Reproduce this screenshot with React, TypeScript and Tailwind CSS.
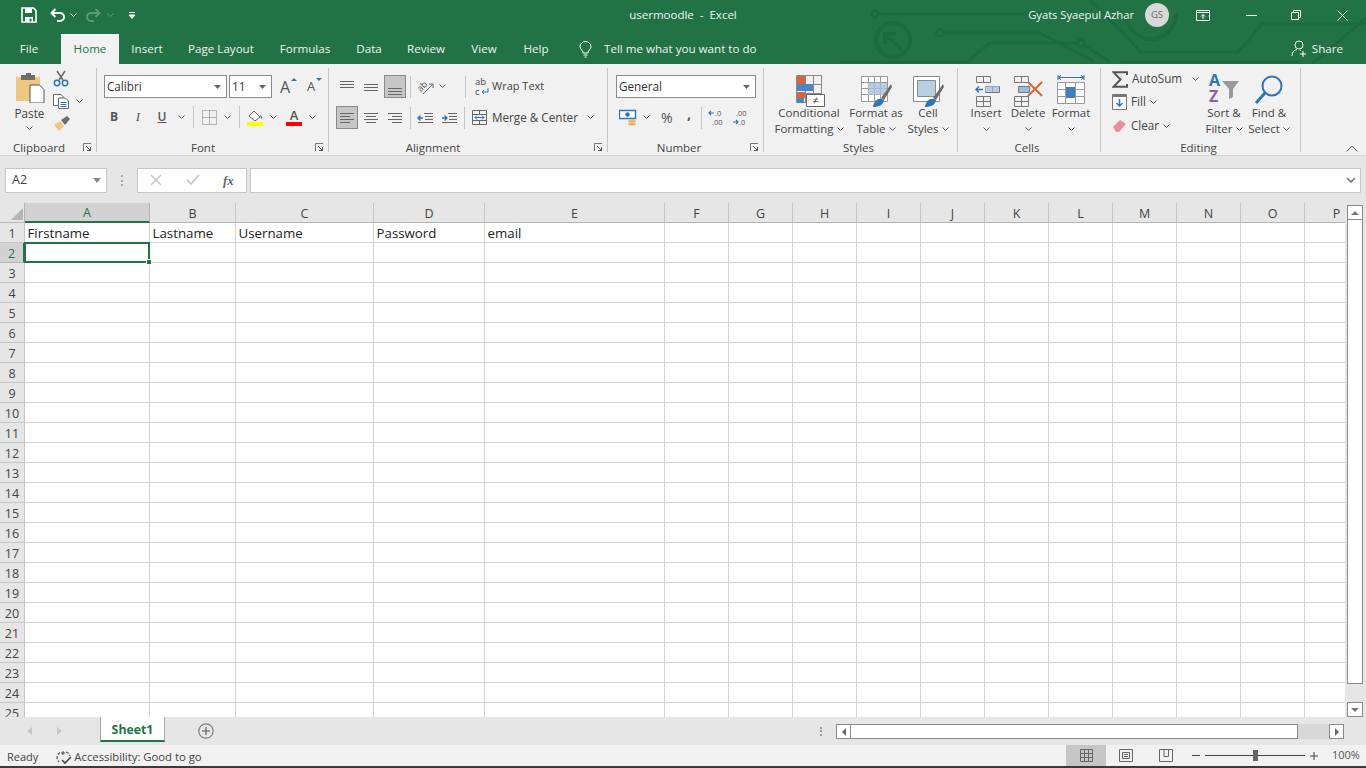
const columns = ["A", "B", "C", "D", "E", "F", "G", "H", "I", "J", "K", "L", "M", "N", "O", "P"];
const firstRow: Record<string, string> = { A: "Firstname", B: "Lastname", C: "Username", D: "Password", E: "email" };
const rows = Array.from({ length: 25 }, (_, i) => i + 1);

const Chevron = ({ className = "", color = "#555" }: { className?: string; color?: string }) => (
  <svg width="7" height="5" viewBox="0 0 7 5" className={className}>
    <path d="M0.5 0.5 L3.5 3.5 L6.5 0.5" fill="none" stroke={color} strokeWidth="1" />
  </svg>
);

const Launcher = () => (
  <svg width="9" height="9" viewBox="0 0 9 9" className="shrink-0 ml-auto">
    <path d="M0.5 8 V0.5 H8" fill="none" stroke="#777" />
    <path d="M3 3 L7.5 7.5 M7.5 4 V7.5 H4" fill="none" stroke="#555" />
  </svg>
);

const Sep = ({ h = "h-[22px]" }: { h?: string }) => <div className={`w-px bg-[#c6c6c6] ${h}`} />;

const Lines = ({ ys, widths }: { ys: number[]; widths: [number, number][] }) => (
  <svg width="16" height="16" viewBox="0 0 16 16">
    {ys.map((y, i) => (
      <path key={i} d={`M${widths[i][0]} ${y}.5 H${widths[i][1]}`} stroke="#666" />
    ))}
  </svg>
);

const Group = ({
  width,
  label,
  labelClass,
  launcher,
  children,
}: {
  width: string;
  label: string;
  labelClass: string;
  launcher?: boolean;
  children: React.ReactNode;
}) => (
  <div className={`${width} h-[84px] mt-[4px] border-r border-[#c6c6c6] flex flex-col shrink-0`}>
    <div className="h-[75px] flex">{children}</div>
    <div className="h-[9px] flex items-center pr-[4px]">
      <div className={`text-[11.5px] leading-none text-[#444] text-center ${labelClass}`}>{label}</div>
      {launcher && <Launcher />}
    </div>
  </div>
);

const Combo = ({ width, text }: { width: string; text: string }) => (
  <div className={`${width} h-[23px] bg-white border border-[#8a8a8a] flex items-center justify-between pl-[2px] pr-[5px] text-[11.7px] text-[#333]`}>
    <span>{text}</span>
    <svg width="7" height="4" viewBox="0 0 7 4">
      <path d="M0 0 H7 L3.5 4 Z" fill="#666" />
    </svg>
  </div>
);

const BigButton = ({
  width,
  icon,
  line1,
  line2,
}: {
  width: string;
  icon: React.ReactNode;
  line1: string;
  line2?: string;
}) => (
  <div className={`${width} flex flex-col items-center text-[11.5px] leading-[16px] text-[#444] shrink-0`}>
    <div className="h-[33px] flex items-start">{icon}</div>
    <div className="whitespace-nowrap">{line1}</div>
    <div className="whitespace-nowrap flex items-center gap-[3px] h-[16px]">
      {line2}
      <Chevron />
    </div>
  </div>
);

const TableBase = ({ children }: { children?: React.ReactNode }) => (
  <svg width="34" height="34" viewBox="0 -2 34 34" className="overflow-visible">
    {children}
  </svg>
);

const tabs = [
  { name: "Insert", w: "w-[56px]" },
  { name: "Page Layout", w: "w-[92px]" },
  { name: "Formulas", w: "w-[76px]" },
  { name: "Data", w: "w-[52px]" },
  { name: "Review", w: "w-[62px]" },
  { name: "View", w: "w-[54px]" },
  { name: "Help", w: "w-[50px]" },
];

export default function App() {
  return (
    <div className="w-[1366px] h-[768px] overflow-hidden flex flex-col bg-[#e6e6e6] font-['Open_Sans',sans-serif]">
      {/* green header */}
      <div className="relative h-[64px] bg-[#217346] shrink-0">
        <svg width="1366" height="64" viewBox="0 0 1366 64" className="absolute inset-0">
          <g fill="none" stroke="#1e6a40" strokeWidth="3">
            <circle cx="875" cy="14" r="3" />
            <path d="M878 14 H1040" />
            <circle cx="940" cy="33" r="3.5" />
            <path d="M944 33 H1040 L1095 62" />
            <path d="M840 62 H967 L990 43 H1078" />
            <circle cx="1081" cy="43" r="3.5" />
            <path d="M1084 45 L1110 62" />
            <path d="M1090 0 L1130 40 L1140 52 H1238 L1262 24 H1366" />
            <path d="M1120 62 H1300" />
            <path d="M1366 18 L1312 64" />
            <circle cx="893" cy="40" r="17" strokeWidth="4" />
            <path d="M885 44 V34 H896 M886 35 L902 50" strokeWidth="4" />
            <path d="M1126 14 A25 25 0 0 0 1176 14" strokeWidth="4" />
          </g>
        </svg>
        <div className="relative">
          {/* title bar */}
          <div className="h-[34px] pb-[4px] grid grid-cols-[1fr_auto_1fr] items-center text-white">
            <div className="flex items-center">
              <svg width="16" height="16" viewBox="0 0 16 16" className="ml-[21px]">
                <path d="M1 1 H12.5 L15 3.5 V15 H1 Z" fill="none" stroke="#fff" strokeWidth="1.6" />
                <path d="M4 1 H11 V6 H4 Z M4 10 H12 V15 H4 Z" fill="#fff" />
                <path d="M8.5 11.5 H10.5 V14.5 H8.5 Z" fill="#217346" />
              </svg>
              <svg width="16" height="14" viewBox="0 0 16 14" className="ml-[13px]">
                <path d="M5.5 1 L1.5 5 L5.5 9" fill="none" stroke="#fff" strokeWidth="2" />
                <path d="M2 5 H10 A4 4 0 0 1 10 13 H7" fill="none" stroke="#fff" strokeWidth="2" />
              </svg>
              <Chevron className="ml-[4px]" color="#d5e5db" />
              <svg width="16" height="14" viewBox="0 0 16 14" className="ml-[8px]">
                <path d="M10.5 1 L14.5 5 L10.5 9" fill="none" stroke="#5c9a78" strokeWidth="2" />
                <path d="M14 5 H6 A4 4 0 0 0 6 13 H9" fill="none" stroke="#5c9a78" strokeWidth="2" />
              </svg>
              <Chevron className="ml-[6px]" color="#5c9a78" />
              <svg width="6" height="7" viewBox="0 0 6 7" className="ml-[15px]">
                <path d="M0 0.5 H6 M0 3 H6 L3 6.5 Z" stroke="#fff" fill="#fff" strokeWidth="1" />
              </svg>
            </div>
            <div className="text-[11.5px] whitespace-pre text-[#f2f2f2]">usermoodle  -  Excel</div>
            <div className="flex items-center justify-end">
              <span className="text-[11.2px] text-[#f2f2f2]">Gyats Syaepul Azhar</span>
              <div className="ml-[11px] w-[24px] h-[24px] rounded-full bg-[#d9d9d9] flex items-center justify-center text-[9.5px] text-[#666]">
                GS
              </div>
              <svg width="14" height="11" viewBox="0 0 14 11" className="ml-[27px]">
                <path d="M0.5 0.5 H13.5 V10.5 H0.5 Z M0.5 2.5 H13.5" fill="none" stroke="#fff" />
                <path d="M7 9 V4.5 M5 6.5 L7 4.5 L9 6.5" fill="none" stroke="#fff" />
              </svg>
              <div className="ml-[36px] w-[11px] h-px bg-white" />
              <svg width="10" height="10" viewBox="0 0 10 10" className="ml-[34px]">
                <path d="M0.5 2.5 H7.5 V9.5 H0.5 Z M2.5 2.5 V0.5 H9.5 V7.5 H7.5" fill="none" stroke="#fff" />
              </svg>
              <svg width="11" height="11" viewBox="0 0 11 11" className="ml-[36px] mr-[18px]">
                <path d="M0.5 0.5 L10.5 10.5 M10.5 0.5 L0.5 10.5" stroke="#fff" />
              </svg>
            </div>
          </div>
          {/* tabs */}
          <div className="h-[30px] flex items-center text-[11.6px] text-[#f2f2f2]">
            <div className="w-[61px] h-full flex items-center justify-center pr-[3px]">File</div>
            <div className="w-[58px] h-full bg-[#f1f1f1] text-[#217346] flex items-center justify-center">Home</div>
            {tabs.map((t) => (
              <div key={t.name} className={`${t.w} h-full flex items-center justify-center`}>
                {t.name}
              </div>
            ))}
            <svg width="13" height="17" viewBox="0 0 13 17" className="ml-[18px]">
              <path d="M4 12 C4 9 1 8.5 1 5.5 A5.5 5 0 0 1 12 5.5 C12 8.5 9 9 9 12 Z M4.5 14 H8.5 M5.5 16 H7.5" fill="none" stroke="#fff" />
            </svg>
            <span className="ml-[12px]">Tell me what you want to do</span>
            <div className="ml-auto mr-[23px] flex items-center gap-[5px]">
              <svg width="16" height="17" viewBox="0 0 16 17">
                <circle cx="8" cy="5" r="4" fill="none" stroke="#fff" />
                <path d="M1 16 C1 12 3 10 6 9.5 M9 10 L10 10.5 M9 14 H15 M12 11 V17" fill="none" stroke="#fff" />
              </svg>
              <span>Share</span>
            </div>
          </div>
        </div>
      </div>

      {/* ribbon */}
      <div className="h-[92px] bg-[#f1f1f1] border-b border-[#d4d4d4] flex shrink-0">
        <Group width="w-[97px]" label="Clipboard" labelClass="w-[78px]" launcher>
          <div className="w-[53px] flex flex-col items-center pl-[6px] text-[11.7px] text-[#444]">
            <svg width="30" height="31" viewBox="0 0 30 31" className="mt-[4px]">
              <path d="M1 5 H25 V29 H1 Z" fill="#edc87e" />
              <path d="M6 3 H11 V1 H16 V3 H20 V8 H6 Z" fill="#6d6d6d" />
              <path d="M15 13 H24.5 L29 17.5 V31 H15 Z" fill="#fff" stroke="#555" />
            </svg>
            <div className="mt-[2px] leading-[16px]">Paste</div>
            <Chevron className="mt-[5px]" />
          </div>
          <div className="flex flex-col pt-[2px]">
            <svg width="16" height="17" viewBox="0 0 16 17">
              <path d="M4 1 L10 10 M12 1 L6 10" stroke="#666" strokeWidth="1.5" />
              <circle cx="4" cy="13" r="2.7" fill="none" stroke="#2e75b6" strokeWidth="1.5" />
              <circle cx="12" cy="13" r="2.7" fill="none" stroke="#2e75b6" strokeWidth="1.5" />
            </svg>
            <div className="flex items-center mt-[7px]">
              <svg width="16" height="15" viewBox="0 0 16 15">
                <path d="M0.5 0.5 H8 L10 2.5 V11.5 H0.5 Z" fill="#fff" stroke="#666" />
                <path d="M5.5 4 H12.5 L15.5 7 V14.5 H5.5 Z" fill="#fff" stroke="#666" />
                <path d="M7.5 8.5 H13.5 M7.5 10.5 H13.5 M7.5 12.5 H13.5" stroke="#2e75b6" />
              </svg>
              <Chevron className="ml-[7px]" />
            </div>
            <svg width="18" height="15" viewBox="0 0 18 15" className="mt-[7px]">
              <path d="M1 9 L7 5 L11 10 L6 15 Z" fill="#edc87e" />
              <path d="M8 4 L14 0 L17 3 L12 9 Z" fill="#6d6d6d" />
            </svg>
          </div>
        </Group>

        <Group width="w-[232px]" label="Font" labelClass="w-[212px]" launcher>
          <div className="pl-[7px] pt-[7px] flex flex-col">
            <div className="flex gap-[2px] items-center">
              <Combo width="w-[123px]" text="Calibri" />
              <Combo width="w-[43px]" text="11" />
              <div className="ml-[6px] w-[17px] text-[16px] leading-none text-[#555] relative">
                A
                <span className="absolute right-0 top-[-1px] w-0 h-0 border-x-[3px] border-x-transparent border-b-[3px] border-b-[#2e75b6]" />
              </div>
              <div className="ml-[8px] w-[14px] text-[13px] leading-none text-[#555] relative">
                A
                <span className="absolute right-[-1px] top-[-2px] w-0 h-0 border-x-[3px] border-x-transparent border-t-[3px] border-t-[#2e75b6]" />
              </div>
            </div>
            <div className="flex items-center mt-[8px] h-[22px] text-[12px] text-[#555]">
              <span className="ml-[5px] w-[10px] font-bold text-center">B</span>
              <span className="ml-[14px] w-[10px] italic text-center font-['Liberation_Serif',serif] text-[13px]">I</span>
              <span className="ml-[14px] w-[10px] underline text-center font-semibold">U</span>
              <Chevron className="ml-[11px]" />
              <div className="ml-[8px]"><Sep /></div>
              <svg width="15" height="15" viewBox="0 0 15 15" className="ml-[8px]">
                <path d="M0.5 0.5 H14.5 V14.5 H0.5 Z M7.5 0.5 V14.5 M0.5 7.5 H14.5" fill="none" stroke="#777" strokeDasharray="1 1" />
              </svg>
              <Chevron className="ml-[7px]" />
              <div className="ml-[8px]">
                <Sep />
              </div>
              <svg width="16" height="17" viewBox="0 0 16 17" className="ml-[7px]">
                <path d="M2 7 L7 2 L13 8 L8 12 Z" fill="#fff" stroke="#666" />
                <path d="M13 6 C15 7 16 9 15 10 C14 9 13 8 13 6 Z" fill="#2e75b6" />
                <path d="M0 13 H16 V17 H0 Z" fill="#ffff00" />
              </svg>
              <Chevron className="ml-[7px]" />
              <div className="ml-[9px] w-[16px] flex flex-col items-center leading-none">
                <span className="text-[13px] leading-[13px] font-semibold text-[#555]">A</span>
                <span className="w-[16px] h-[4px] bg-[#ff0000]" />
              </div>
              <Chevron className="ml-[7px]" />
            </div>
          </div>
        </Group>

        <Group width="w-[279px]" label="Alignment" labelClass="w-[208px]" launcher>
          <div className="flex flex-col pl-[7px] pt-[7px]">
            <div className="flex items-center h-[23px]">
              <div className="w-[22px] flex justify-center"><Lines ys={[2, 5, 8]} widths={[[1, 15], [1, 15], [1, 15]]} /></div>
              <div className="ml-[2px] w-[22px] flex justify-center"><Lines ys={[5, 8, 11]} widths={[[1, 15], [1, 15], [1, 15]]} /></div>
              <div className="ml-[2px] w-[22px] h-[23px] bg-[#c6c6c6] border border-[#8a8a8a] flex justify-center items-center"><Lines ys={[9, 12, 15]} widths={[[1, 15], [1, 15], [1, 15]]} /></div>
              <div className="ml-[4px]"><Sep /></div>
              <svg width="17" height="16" viewBox="0 0 17 16" className="ml-[6px] overflow-visible">
                <text x="1" y="11" fontSize="9" fill="#555" transform="rotate(-45 5 9)">ab</text>
                <path d="M6 15 L15 6 M12 5 H16 V9" fill="none" stroke="#666" />
              </svg>
              <Chevron className="ml-[5px]" />
              <div className="ml-[19px]"><Sep /></div>
              <svg width="15" height="18" viewBox="0 0 15 18" className="ml-[9px] overflow-visible">
                <text x="0" y="7" fontSize="9.5" fill="#444">ab</text>
                <text x="0" y="17" fontSize="9.5" fill="#444">c</text>
                <path d="M13 10 V14 H7 M9 12 L7 14 L9 16" fill="none" stroke="#2e75b6" />
              </svg>
              <span className="ml-[2px] text-[11px] text-[#444]">Wrap Text</span>
            </div>
            <div className="flex items-center h-[23px] mt-[8px]">
              <div className="w-[22px] h-[23px] bg-[#c6c6c6] border border-[#8a8a8a] flex justify-center items-center"><Lines ys={[3, 6, 9, 12]} widths={[[1, 15], [1, 11], [1, 15], [1, 11]]} /></div>
              <div className="ml-[2px] w-[22px] flex justify-center"><Lines ys={[3, 6, 9, 12]} widths={[[1, 15], [3, 13], [1, 15], [3, 13]]} /></div>
              <div className="ml-[2px] w-[22px] flex justify-center"><Lines ys={[3, 6, 9, 12]} widths={[[1, 15], [5, 15], [1, 15], [5, 15]]} /></div>
              <div className="ml-[4px]"><Sep /></div>
              <svg width="17" height="14" viewBox="0 0 17 14" className="ml-[6px]">
                <path d="M7 2.5 H16 M8 5.5 H16 M8 8.5 H16 M1 11.5 H16" stroke="#666" />
                <path d="M6 7 H1 M3.5 4.5 L1 7 L3.5 9.5" fill="none" stroke="#2e75b6" strokeWidth="1.4" />
              </svg>
              <svg width="17" height="14" viewBox="0 0 17 14" className="ml-[7px]">
                <path d="M7 2.5 H16 M8 5.5 H16 M8 8.5 H16 M1 11.5 H16" stroke="#666" />
                <path d="M1 7 H6 M3.5 4.5 L6 7 L3.5 9.5" fill="none" stroke="#2e75b6" strokeWidth="1.4" />
              </svg>
              <div className="ml-[6px]"><Sep /></div>
              <svg width="15" height="15" viewBox="0 0 15 15" className="ml-[7px]">
                <path d="M0.5 0.5 H14.5 V14.5 H0.5 Z M0.5 4.5 H14.5 M0.5 10.5 H14.5 M7.5 0.5 V4.5 M7.5 10.5 V14.5" fill="none" stroke="#666" />
                <path d="M3 7.5 H12 M5 5.5 L3 7.5 L5 9.5 M10 5.5 L12 7.5 L10 9.5" fill="none" stroke="#2e75b6" />
              </svg>
              <span className="ml-[5px] text-[11.7px] text-[#444] whitespace-nowrap">Merge &amp; Center</span>
              <Chevron className="ml-[9px]" />
            </div>
          </div>
        </Group>

        <Group width="w-[156px]" label="Number" labelClass="w-[142px]" launcher>
          <div className="flex flex-col pl-[8px] pt-[7px]">
            <Combo width="w-[140px]" text="General" />
            <div className="flex items-center h-[23px] mt-[8px]">
              <svg width="18" height="17" viewBox="0 0 18 17" className="ml-[3px]">
                <path d="M0.5 1.5 H16.5 V9.5 H0.5 Z" fill="#fff" stroke="#2e75b6" strokeWidth="1.4" />
                <circle cx="8.5" cy="5.5" r="2.2" fill="#2e75b6" />
                <ellipse cx="13" cy="12" rx="4" ry="1.6" fill="#e6b665" />
                <ellipse cx="13" cy="15" rx="4" ry="1.6" fill="#e6b665" />
              </svg>
              <Chevron className="ml-[6px]" />
              <span className="ml-[11px] text-[14px] text-[#555] w-[14px]">%</span>
              <span className="ml-[12px] text-[14px] font-bold text-[#555] w-[8px] leading-[14px] mb-[8px]">,</span>
              <div className="ml-[6px]"><Sep /></div>
              <svg width="18" height="18" viewBox="0 0 18 18" className="ml-[6px] overflow-visible">
                <path d="M6 4 H1 M3 2 L1 4 L3 6" fill="none" stroke="#2e75b6" strokeWidth="1.2" />
                <text x="7" y="7" fontSize="7.5" fill="#555">.0</text>
                <text x="4" y="16" fontSize="7.5" fill="#555">.00</text>
              </svg>
              <svg width="18" height="18" viewBox="0 0 18 18" className="ml-[6px] overflow-visible">
                <text x="4" y="7" fontSize="7.5" fill="#555">.00</text>
                <path d="M1 13 H6 M4 11 L6 13 L4 15" fill="none" stroke="#2e75b6" strokeWidth="1.2" />
                <text x="7" y="16" fontSize="7.5" fill="#555">.0</text>
              </svg>
            </div>
          </div>
        </Group>

        <Group width="w-[194px]" label="Styles" labelClass="w-[193px]">
          <div className="flex pl-[3px] pt-[4px]">
            <BigButton
              width="w-[84px]"
              line1="Conditional"
              line2="Formatting"
              icon={
                <TableBase>
                  <path d="M4.5 1.5 H29.5 V28.5 H4.5 Z M4.5 10.5 H29.5 M4.5 19.5 H29.5 M13.5 1.5 V28.5 M21.5 1.5 V28.5" fill="none" stroke="#888" />
                  <path d="M5 2 H13 V10 H5 Z" fill="#d9653b" />
                  <path d="M5 10 H21 V17 H5 Z" fill="#4a86c5" />
                  <path d="M5 18 H13 V24 H5 Z" fill="#d9653b" />
                  <path d="M5 24 H12 V29 H5 Z" fill="#4a86c5" />
                  <path d="M14.5 20.5 H32.5 V32.5 H14.5 Z" fill="#fff" stroke="#666" />
                  <text x="23.5" y="30" textAnchor="middle" fontSize="11" fill="#444">≠</text>
                </TableBase>
              }
            />
            <BigButton
              width="w-[50px]"
              line1="Format as"
              line2="Table"
              icon={
                <TableBase>
                  <path d="M2.5 2.5 H28.5 V27.5 H2.5 Z M2.5 8.5 H28.5 M2.5 14.5 H28.5 M2.5 20.5 H28.5 M9.5 2.5 V27.5 M15.5 2.5 V27.5 M21.5 2.5 V27.5" fill="#fff" stroke="#9a9a9a" />
                  <path d="M9 9 H28 V21 H9 Z" fill="#a9bfdd" opacity="0.8" />
                  <path d="M22 24 L32 10 L33 13 L25 26 Z" fill="#6d6d6d" />
                  <path d="M14 33 C15 26 20 23 25 26 C24 31 20 33 14 33 Z" fill="#2e75b6" />
                </TableBase>
              }
            />
            <BigButton
              width="w-[54px]"
              line1="Cell"
              line2="Styles"
              icon={
                <TableBase>
                  <path d="M2.5 2.5 H28.5 V27.5 H2.5 Z" fill="#fff" stroke="#8a8a8a" />
                  <path d="M6.5 6.5 H24.5 V22.5 H6.5 Z" fill="#b9cde5" stroke="#8a8a8a" />
                  <path d="M22 24 L32 10 L33 13 L25 26 Z" fill="#6d6d6d" />
                  <path d="M14 33 C15 26 20 23 25 26 C24 31 20 33 14 33 Z" fill="#2e75b6" />
                </TableBase>
              }
            />
          </div>
        </Group>

        <Group width="w-[143px]" label="Cells" labelClass="w-[142px]">
          <div className="flex pl-[7px] pt-[4px]">
            <BigButton
              width="w-[42px]"
              line1="Insert"
              icon={
                <TableBase>
                  <path d="M7.5 2.5 H21.5 V8.5 H7.5 Z M14.5 2.5 V8.5 M7.5 22.5 H21.5 V32.5 H7.5 Z M7.5 27.5 H21.5 M14.5 22.5 V32.5 M16.5 12.5 H30.5 V18.5 H16.5 Z M23.5 12.5 V18.5" fill="none" stroke="#777" />
                  <path d="M16 12 H30 V18 H16 Z" fill="#9dbbdc" opacity="0.7" />
                  <path d="M7 15.5 H14 M10 12.5 L7 15.5 L10 18.5" fill="none" stroke="#2e75b6" strokeWidth="1.4" />
                </TableBase>
              }
            />
            <BigButton
              width="w-[42px]"
              line1="Delete"
              icon={
                <TableBase>
                  <path d="M3.5 2.5 H17.5 V8.5 H3.5 Z M10.5 2.5 V8.5 M3.5 22.5 H17.5 V32.5 H3.5 Z M3.5 27.5 H17.5 M10.5 22.5 V32.5 M7.5 12.5 H18.5 V18.5 H7.5 Z" fill="none" stroke="#777" />
                  <path d="M8 13 H18 V18 H8 Z" fill="#9dbbdc" />
                  <path d="M17 8 L31 22 M31 8 L17 22" stroke="#d9653b" strokeWidth="2" />
                </TableBase>
              }
            />
            <BigButton
              width="w-[44px]"
              line1="Format"
              icon={
                <TableBase>
                  <path d="M4 3.5 H30 M4 1 V6 M30 1 V6 M7 1.5 L4 3.5 L7 5.5 M27 1.5 L30 3.5 L27 5.5" fill="none" stroke="#2e75b6" />
                  <path d="M3.5 8.5 H30.5 V29.5 H3.5 Z M3.5 15.5 H30.5 M3.5 22.5 H30.5 M11.5 8.5 V29.5 M21.5 8.5 V29.5" fill="#fff" stroke="#999" />
                  <path d="M12 13 H21 V24 H12 Z" fill="#3d7fbf" />
                </TableBase>
              }
            />
          </div>
        </Group>

        <Group width="w-[200px]" label="Editing" labelClass="w-[199px]">
          <div className="flex flex-col pl-[11px] pt-[1px] text-[11.7px] text-[#444] w-[102px] shrink-0">
            <div className="flex items-center h-[20px]">
              <svg width="16" height="17" viewBox="0 0 16 17">
                <path d="M15 4 V1.2 H1.5 L8.5 8.5 L1.5 15.8 H15 V13" fill="none" stroke="#555" strokeWidth="2" />
              </svg>
              <span className="ml-[4px] whitespace-nowrap">AutoSum</span>
              <Chevron className="ml-[10px]" />
            </div>
            <div className="flex items-center h-[20px] mt-[3px]">
              <svg width="15" height="16" viewBox="0 0 15 16">
                <path d="M0.5 0.5 H14.5 V15.5 H0.5 Z" fill="#fff" stroke="#777" />
                <path d="M0.5 0.5 H14.5 V3 H0.5 Z" fill="#777" />
                <path d="M7.5 5 V12 M4.5 9 L7.5 12 L10.5 9" fill="none" stroke="#2e75b6" strokeWidth="1.5" />
              </svg>
              <span className="ml-[4px]">Fill</span>
              <Chevron className="ml-[4px]" />
            </div>
            <div className="flex items-center h-[20px] mt-[4px]">
              <svg width="15" height="14" viewBox="0 0 15 14">
                <path d="M1 8 L8 1 L14 5 L7 13 H4 Z" fill="#ea8fa0" />
              </svg>
              <span className="ml-[4px]">Clear</span>
              <Chevron className="ml-[4px]" />
            </div>
          </div>
          <div className="flex pt-[4px] -ml-[2px]">
            <BigButton
              width="w-[46px]"
              line1="Sort &"
              line2="Filter"
              icon={
                <svg width="32" height="34" viewBox="0 -2 32 34" className="overflow-visible">
                  <text x="1" y="12" fontSize="16" fontWeight="700" fill="#2e75b6">A</text>
                  <text x="1" y="28" fontSize="16" fontWeight="700" fill="#8e5bb5">Z</text>
                  <path d="M14 7 H31 L25 15 V23 L21 25 V15 Z" fill="#9a9a9a" />
                </svg>
              }
            />
            <BigButton
              width="w-[44px]"
              line1="Find &"
              line2="Select"
              icon={
                <svg width="30" height="32" viewBox="0 -2 30 32" className="overflow-visible">
                  <circle cx="18" cy="12" r="9.5" fill="none" stroke="#2e75b6" strokeWidth="2" />
                  <path d="M11 19 L2 29" stroke="#2e75b6" strokeWidth="3" />
                </svg>
              }
            />
          </div>
        </Group>

        <div className="flex-1 flex justify-end items-end pb-[3px] pr-[8px]">
          <svg width="12" height="7" viewBox="0 0 12 7">
            <path d="M0.5 6.5 L6 1 L11.5 6.5" fill="none" stroke="#555" />
          </svg>
        </div>
      </div>

      {/* formula bar */}
      <div className="h-[47px] shrink-0 flex items-center pl-[5px] pr-[5px] pt-[1px]">
        <div className="w-[102px] h-[25px] bg-white border border-[#c6c6c6] flex items-center justify-between pl-[6px] pr-[5px] text-[12.5px] text-[#444]">
          A2
          <svg width="8" height="5" viewBox="0 0 8 5">
            <path d="M0 0 H8 L4 5 Z" fill="#888" />
          </svg>
        </div>
        <div className="w-[2px] h-[11px] ml-[14px] border-l-2 border-dotted border-[#aaa]" />
        <div className="ml-[14px] w-[110px] h-[25px] bg-white border border-[#c6c6c6] flex items-center">
          <svg width="12" height="12" viewBox="0 0 12 12" className="ml-[12px]">
            <path d="M1 1 L11 11 M11 1 L1 11" stroke="#c9c9c9" strokeWidth="1.6" />
          </svg>
          <svg width="14" height="12" viewBox="0 0 14 12" className="ml-[24px]">
            <path d="M1 6 L5 10 L13 1" fill="none" stroke="#c9c9c9" strokeWidth="1.8" />
          </svg>
          <span className="ml-[23px] text-[13px] italic text-[#666] font-['Liberation_Serif',serif] font-bold leading-none">fx</span>
        </div>
        <div className="ml-[3px] flex-1 h-[25px] bg-white border border-[#c6c6c6] flex items-center justify-end pr-[4px]">
          <svg width="10" height="6" viewBox="0 0 10 6">
            <path d="M1 1 L5 5 L9 1" fill="none" stroke="#777" strokeWidth="1.6" />
          </svg>
        </div>
      </div>

      {/* sheet */}
      <div className="h-[514px] shrink-0 flex">
        <div className="w-[1345px] h-full overflow-hidden bg-white">
          <div className="grid grid-cols-[25px_125px_86px_138px_111px_180px_repeat(11,64px)] auto-rows-[20px] text-[12.5px]">
            <div className="bg-[#e6e6e6] border-r border-b border-[#b4b4b4] flex items-end justify-end">
              <svg width="12" height="12" viewBox="0 0 12 12" className="mb-[2px] mr-[1px]">
                <path d="M12 0 V12 H0 Z" fill="#b4b4b4" />
              </svg>
            </div>
            {columns.map((c) =>
              c === "A" ? (
                <div key={c} className="bg-[#d2d2d2] border-b-2 border-[#217346] text-[#217346] flex items-center justify-center border-r border-r-[#b4b4b4] pt-[3px]">
                  {c}
                </div>
              ) : (
                <div key={c} className="bg-[#e6e6e6] border-b border-r border-[#c6c6c6] border-b-[#b4b4b4] text-[#444] flex items-center justify-center pt-[4px]">
                  {c}
                </div>
              ),
            )}
            {rows.map((r) => (
              <div key={r} className="contents">
                <div
                  className={
                    r === 2
                      ? "bg-[#d2d2d2] text-[#217346] border-r-2 border-r-[#217346] border-b border-b-[#b4b4b4] flex items-center justify-center pt-[3px]"
                      : "bg-[#e6e6e6] text-[#444] border-r border-b border-[#c6c6c6] flex items-center justify-center pt-[3px]"
                  }
                >
                  {r}
                </div>
                {columns.map((c) => (
                  <div key={c} className="relative border-r border-b border-[#d4d4d4] pl-[2.5px] pt-[2px] flex items-center text-[13.3px] text-[#222] whitespace-nowrap">
                    {r === 1 ? firstRow[c] : ""}
                    {r === 2 && c === "A" && (
                      <div className="absolute -left-px -top-px -right-px -bottom-[1px] border-2 border-[#217346] z-10">
                        <div className="absolute -right-[4px] -bottom-[4px] w-[6px] h-[6px] bg-[#217346] border border-white" />
                      </div>
                    )}
                  </div>
                ))}
              </div>
            ))}
          </div>
        </div>
        <div className="w-[21px] h-full flex flex-col items-center pl-[2px] pr-[3px] pt-[2px]">
          <div className="w-[16px] h-[15px] bg-white border border-[#8a8a8a] flex items-center justify-center">
            <svg width="8" height="4" viewBox="0 0 8 4"><path d="M4 0 L8 4 H0 Z" fill="#777" /></svg>
          </div>
          <div className="w-[16px] h-[464px] bg-white border border-[#8a8a8a] border-t-0" />
          <div className="flex-1" />
          <div className="w-[16px] h-[15px] bg-white border border-[#8a8a8a] flex items-center justify-center">
            <svg width="8" height="4" viewBox="0 0 8 4"><path d="M0 0 H8 L4 4 Z" fill="#777" /></svg>
          </div>
        </div>
      </div>

      {/* sheet tabs */}
      <div className="h-[28px] shrink-0 flex items-start">
        <svg width="6" height="8" viewBox="0 0 6 8" className="ml-[27px] mt-[10px]"><path d="M5 0 V8 L0 4 Z" fill="#c6c6c6" /></svg>
        <svg width="6" height="8" viewBox="0 0 6 8" className="ml-[23px] mt-[10px]"><path d="M1 0 V8 L6 4 Z" fill="#c6c6c6" /></svg>
        <div className="ml-[38px] w-[65px] h-[25px] bg-white border-x border-[#a6a6a6] border-b-2 border-b-[#217346] flex items-center justify-center pt-[3px] text-[12.3px] font-bold text-[#217346]">
          Sheet1
        </div>
        <svg width="16" height="16" viewBox="0 0 16 16" className="ml-[33px] mt-[6px]">
          <circle cx="8" cy="8" r="7.2" fill="none" stroke="#7f7f7f" strokeWidth="1.2" />
          <path d="M4 8 H12 M8 4 V12" stroke="#7f7f7f" strokeWidth="1.6" />
        </svg>
        <div className="ml-[606px] mt-[10px] h-[9px] w-[2px] border-l-2 border-dotted border-[#999]" />
        <div className="ml-[14px] mt-[7px] w-[508px] h-[15px] flex">
          <div className="w-[15px] h-[15px] bg-white border border-[#8a8a8a] flex items-center justify-center">
            <svg width="4" height="8" viewBox="0 0 4 8"><path d="M4 0 V8 L0 4 Z" fill="#666" /></svg>
          </div>
          <div className="w-[447px] h-[15px] bg-white border border-[#8a8a8a] border-l-0" />
          <div className="flex-1 bg-[#d8d8d8]" />
          <div className="w-[15px] h-[15px] bg-white border border-[#8a8a8a] flex items-center justify-center">
            <svg width="4" height="8" viewBox="0 0 4 8"><path d="M0 0 V8 L4 4 Z" fill="#666" /></svg>
          </div>
        </div>
      </div>

      {/* status bar */}
      <div className="h-[21px] shrink-0 bg-[#f1f1f1] flex items-center text-[11px] text-[#444]">
        <span className="ml-[7px] mt-[4px]">Ready</span>
        <svg width="17" height="15" viewBox="0 0 17 15" className="ml-[18px] mt-[4px]">
          <path d="M4 2.5 A6 6 0 0 0 3 12 M10 2 A6 6 0 0 1 14 6" fill="none" stroke="#555" strokeDasharray="3 1.5" strokeWidth="1.3" />
          <path d="M6 10 L9 13 L15 7" fill="none" stroke="#444" strokeWidth="1.6" />
          <path d="M7 1 V5 M5 3 H9" stroke="#444" />
        </svg>
        <span className="ml-[1px] mt-[4px] whitespace-nowrap text-[11.3px]">Accessibility: Good to go</span>
        <div className="ml-auto w-[300px] h-full flex items-center shrink-0">
          <div className="w-[40px] h-full bg-[#c6c6c6] flex items-center justify-center">
            <svg width="13" height="13" viewBox="0 0 13 13">
              <path d="M0.5 0.5 H12.5 V12.5 H0.5 Z M4.5 0.5 V12.5 M8.5 0.5 V12.5 M0.5 4.5 H12.5 M0.5 8.5 H12.5" fill="none" stroke="#666" />
            </svg>
          </div>
          <div className="w-[40px] flex justify-center">
            <svg width="14" height="13" viewBox="0 0 14 13">
              <path d="M0.5 0.5 H13.5 V12.5 H0.5 Z" fill="none" stroke="#666" />
              <path d="M3.5 3.5 H10.5 V9.5 H3.5 Z M5 5.5 H9 M5 7.5 H9" fill="none" stroke="#666" />
            </svg>
          </div>
          <div className="w-[40px] flex justify-center">
            <svg width="14" height="13" viewBox="0 0 14 13">
              <path d="M0.5 0.5 H13.5 V12.5 H0.5 Z M5 0.5 V7.5 H9.5 V0.5" fill="none" stroke="#666" />
            </svg>
          </div>
          <div className="ml-[6px] w-[8px] h-px bg-[#444]" />
          <div className="ml-[5px] w-[100px] h-px bg-[#444] relative">
            <div className="absolute left-[48px] -top-[5px] w-[5px] h-[11px] bg-[#666]" />
          </div>
          <svg width="8" height="8" viewBox="0 0 8 8" className="ml-[5px]">
            <path d="M0 4 H8 M4 0 V8" stroke="#444" />
          </svg>
          <span className="ml-[14px] text-[#555]">100%</span>
        </div>
      </div>
      <div className="flex-1 bg-[#3a3a3a]" />
    </div>
  );
}
